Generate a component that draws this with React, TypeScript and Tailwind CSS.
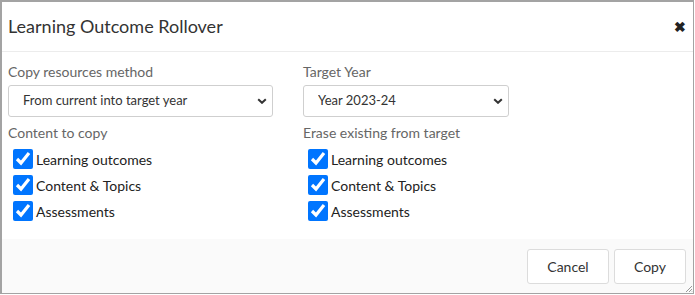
import { useState } from 'react'

const ITEMS = ['Learning outcomes', 'Content & Topics', 'Assessments']

function Chevron() {
  return (
    <svg
      viewBox="0 0 10 6"
      className="pointer-events-none absolute right-[6px] top-1/2 h-[6px] w-[10px] -translate-y-1/2 text-[#333]"
      aria-hidden
    >
      <path d="M1.2 1.2 5 4.8 8.8 1.2" fill="none" stroke="currentColor" strokeWidth="2" />
    </svg>
  )
}

function Field({
  label,
  value,
  options,
  width,
}: {
  label: string
  value: string
  options: string[]
  width: string
}) {
  const [v, setV] = useState(value)
  return (
    <div>
      <label className="block h-5 text-[14px] leading-5 text-[#666]">{label}</label>
      <div className={`relative mt-[3px] ${width}`}>
        <select
          value={v}
          onChange={(e) => setV(e.target.value)}
          className="h-8 w-full appearance-none rounded-[3px] border border-[#cfcfcf] bg-white pl-[14px] text-[13px] text-[#333]"
        >
          {options.map((o) => (
            <option key={o}>{o}</option>
          ))}
        </select>
        <Chevron />
      </div>
    </div>
  )
}

function CheckList({ label }: { label: string }) {
  return (
    <div className="mt-[6px]">
      <p className="h-5 text-[14px] leading-5 text-[#666]">{label}</p>
      <ul className="mt-[3px]">
        {ITEMS.map((item) => (
          <li key={item} className="flex h-[26px] items-center">
            <input
              type="checkbox"
              defaultChecked
              className="ml-[5px] h-5 w-5 accent-[#0075ff]"
            />
            <span className="ml-[3px] text-[14px] text-[#222]">{item}</span>
          </li>
        ))}
      </ul>
    </div>
  )
}

export default function App() {
  return (
    <div className="h-[295px] w-[695px] bg-white font-['Lato',sans-serif]">
      <div className="flex h-[294px] w-[694px] flex-col border-t-2 border-r border-b border-l-2 border-[#a3a3a3]">
        <header className="flex h-[50px] items-center justify-between border-b border-[#ececec] pl-[6px] pr-[7px]">
          <h1 className="text-[18px] text-[#333]">Learning Outcome Rollover</h1>
          <button className="text-[14px] font-bold leading-none text-[#222]" aria-label="Close">
            ✖
          </button>
        </header>

        <div className="grid flex-1 grid-cols-[295px_1fr] pl-[6px] pt-[10px]">
          <div>
            <Field
              label="Copy resources method"
              value="From current into target year"
              options={['From current into target year', 'From target into current year']}
              width="w-[265px]"
            />
            <CheckList label="Content to copy" />
          </div>
          <div>
            <Field
              label="Target Year"
              value="Year 2023-24"
              options={['Year 2023-24', 'Year 2024-25']}
              width="w-[206px]"
            />
            <CheckList label="Erase existing from target" />
          </div>
        </div>

        <footer className="relative flex h-[54px] items-center justify-end gap-[5px] bg-[#fafafa] pr-[7px]">
          <button className="h-[35px] w-[82px] rounded-[3px] border border-[#dcdcdc] bg-white text-[14px] text-[#333]">
            Cancel
          </button>
          <button className="h-[35px] w-[72px] rounded-[3px] border border-[#dcdcdc] bg-white text-[14px] text-[#333]">
            Copy
          </button>
          <svg viewBox="0 0 8 8" className="absolute bottom-0 right-0 h-2 w-2" aria-hidden>
            <path d="M7 1 1 7M7 4 4 7M7 6.5 6.5 7" stroke="#999" strokeWidth="1" fill="none" />
          </svg>
        </footer>
      </div>
    </div>
  )
}
